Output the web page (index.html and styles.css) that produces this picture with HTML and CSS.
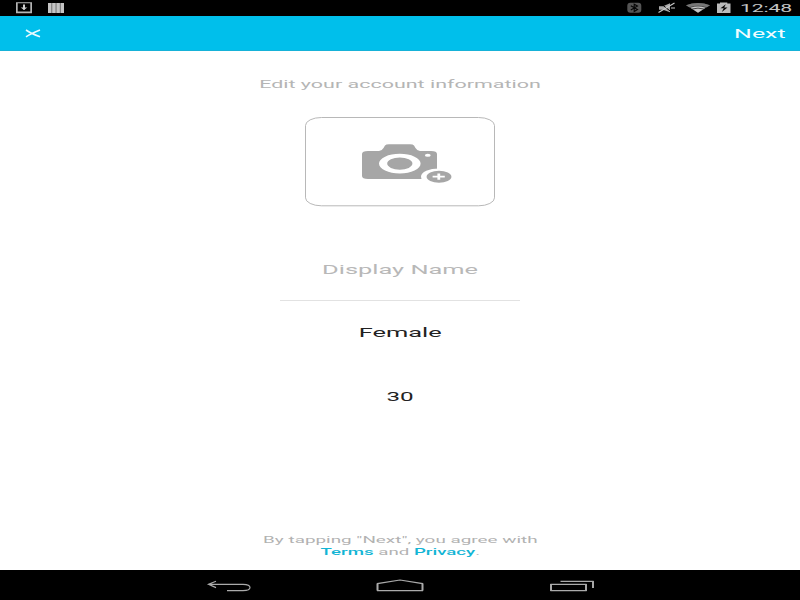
FILE: index.html
```html
<!DOCTYPE html>
<html lang="en">
<head>
<meta charset="utf-8">
<title>Edit account</title>
<link rel="stylesheet" href="styles.css">
</head>
<body>
<div class="screen">
  <header class="status">
    <svg class="left-icons" width="50" height="16" viewBox="0 0 50 16">
      <path d="M0 2.2H16V13.2H0Z M1.7 3.2V11.6H14.3V3.2Z" fill="#b5b5b5" fill-rule="evenodd"/>
      <path d="M8 4.6V9.4" stroke="#d0d0d0" stroke-width="2"/>
      <path d="M4.7 7.6H11.3L8 10Z" fill="#d0d0d0"/>
      <path d="M32 3H48V13H32Z" fill="#777"/>
      <path d="M32 3h3.2v10H32zM36.3 3h3.2v10h-3.2zM40.6 3h3.2v10h-3.2zM44.9 3H48v10h-3.1z" fill="#c4c4c4"/>
    </svg>
    <svg class="right-icons" width="106" height="16" viewBox="626 0 106 16">
      <rect x="627.3" y="2.8" width="14" height="10" rx="3" fill="#555"/>
      <path d="M630.8 5.7L637.5 9.6L634.2 11.5V4.2L637.5 6.1L630.8 10" fill="none" stroke="#050505" stroke-width="1.1"/>
      <path d="M659 6.2H663L670 3.2V12.2L663 9.8H659Z" fill="#aaa"/>
      <path d="M660 3L672 12.5" stroke="#000" stroke-width="1"/>
      <path d="M658.5 12.5L674.5 3M671 8H675" stroke="#c7c7c7" stroke-width="1.2"/>
      <path d="M686 5.2Q698 .8 710 5.2L698 12.7Z" fill="#484848"/>
      <path d="M686 5.2Q698 .8 710 5.2L706.8 7.2Q698 4.4 689.2 7.2Z" fill="#777"/>
      <path d="M690.5 7.8Q698 5.4 705.5 7.8L698 12.7Z" fill="#c4c4c4"/>
      <path d="M692.2 9Q698 7.3 703.8 9" fill="none" stroke="#222" stroke-width=".8"/>
      <path d="M717 3.6H720V2.6H727.3V3.6H730.5V13H717Z" fill="#bbb"/>
      <path d="M725.8 4.2L720.5 8.3H723.8L721.8 12L727.5 7.4H724.2Z" fill="#050505"/>
    </svg>
    <span class="wide clock">12:48</span>
  </header>
  <nav class="bar">
    <svg width="16" height="9" viewBox="0 0 16 9"><path d="M1 1Q6 4.5 15 7.8M1 7.8Q6 4.5 15 1" fill="none" stroke="#e6faff" stroke-width="1.6"/></svg>
    <span class="wide large next">Next</span>
  </nav>
  <main class="content">
    <div class="row title"><span class="wide">Edit your account information</span></div>
    <div class="photo">
      <svg width="190" height="90" viewBox="305 117 190 90">
        <rect x="305.5" y="117.5" width="189" height="88.3" rx="16" ry="8" fill="none" stroke="#b0b0b0" stroke-width=".9"/>
        <path d="M368 151H379Q382 150.8 383.5 148L385 145.5Q386 144.2 389 144.2H410Q413 144.2 414 145.5L415.5 148Q417 150.8 420 151H431Q437 151 437 154V179H368Q362 179 362 176V154Q362 151 368 151Z" fill="#a6a6a6"/>
        <path d="M379 163.6a20.8 9.8 0 1 0 41.6 0a20.8 9.8 0 1 0-41.6 0ZM387.2 163.6a12.6 6.1 0 1 1 25.2 0a12.6 6.1 0 1 1-25.2 0Z" fill="#fff" fill-rule="evenodd"/>
        <ellipse cx="427.8" cy="155.2" rx="2.9" ry="1.5" fill="#fff"/>
        <ellipse cx="439" cy="176.7" rx="18" ry="8.3" fill="#fff"/>
        <ellipse cx="439" cy="176.7" rx="12.4" ry="6" fill="#a6a6a6"/>
        <path d="M437.4 173.6h2.8v2.2h4.6v1.8h-4.6v2.2h-2.8v-2.2h-4.8v-1.8h4.8Z" fill="#fff"/>
      </svg>
    </div>
    <div class="row name"><span class="wide large">Display Name</span></div>
    <div class="row gender"><span class="wide large">Female</span></div>
    <div class="row age"><span class="wide large">30</span></div>
    <div class="legal">
      <div class="row agree"><span class="wide">By tapping "Next", you agree with</span></div>
      <div class="row"><span class="wide"><b>Terms</b> and <b>Privacy</b>.</span></div>
    </div>
  </main>
  <footer class="keys">
    <svg width="390" height="30" viewBox="206 570 390 30" fill="none" stroke="#aaa" stroke-width="1.2">
      <path d="M216 581.3L208.5 584.3L216 587.6M208.5 584.3H243Q250 584.5 250 587.5Q250 590.6 243 590.6H227"/>
      <path d="M377.5 590.6V583.6L400 580L422.5 583.6V590.6Z"/>
      <path d="M551 584.4H586V590.6H551Z"/>
      <path d="M560.5 581.3H593V588"/>
      <path d="M377.5 590.6V583.6M422.5 583.6V590.6M551 584V591M586 584V591M593 581V588" stroke-width="1.9"/>
    </svg>
  </footer>
</div>
</body>
</html>
```
FILE: styles.css
```css
* { box-sizing: border-box; }
body { margin: 0; background: #fff; font-family: Roboto, "Liberation Sans", sans-serif; }
.screen { width: 800px; height: 600px; display: flex; flex-direction: column; overflow: hidden; }
svg { display: block; flex: none; }

/* Glyphs are stretched to the display's wide pixel aspect. */
.wide { display: inline-block; white-space: nowrap; transform: scaleX(2.1333); }
.large { font-size: 12.4px; transform: scaleX(2.05); }

.status { height: 16px; background: #000; display: flex; align-items: center; padding: 0 8px 0 16px; }
.right-icons { margin-left: auto; }
.clock { width: 60px; text-align: right; transform-origin: right; color: #c4c4c4; font-size: 10px; letter-spacing: -.1px; line-height: 16px; padding-top: 1px; }
.bar { height: 35px; background: #00bfeb; border-bottom: 1px solid #16b2d8; display: flex; align-items: center; justify-content: space-between; padding: 0 14px 0 25px; }
.next { transform-origin: right; color: #f2fcff; transform: scaleX(2.01); }
.content { flex: 1; display: flex; flex-direction: column; align-items: center; }
.row { display: flex; justify-content: center; }
.title { margin-top: 26px; height: 40px; line-height: 16px; font-size: 10.07px; color: #b5b5b5; }
.photo { width: 190px; height: 90px; }
.name { width: 240px; height: 43px; margin-top: 51px; border-bottom: 1px solid #e2e2e2; line-height: 24px; color: #b8b8b8; }
.gender { margin-top: 19px; line-height: 26px; color: #222; }
.age { margin-top: 38px; line-height: 26px; color: #222; }
.age .large { transform: scaleX(1.95); }
.legal { margin-top: 124px; font-size: 8.75px; line-height: 12px; color: #b2b2b2; }
.agree { font-size: 8.86px; }
.legal b { color: #13b5d5; font-weight: 500; }
.keys { height: 30px; background: #000; padding-left: 206px; }
```
